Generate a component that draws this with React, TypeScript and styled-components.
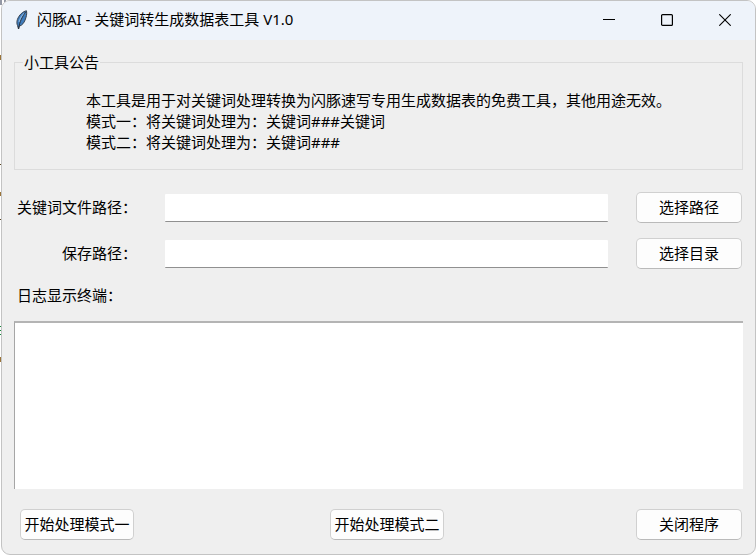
import React from "react";
import styled, { createGlobalStyle } from "styled-components";

const GlobalStyle = createGlobalStyle`
  *, *::before, *::after { box-sizing: border-box; }
  body {
    margin: 0;
    background: #fff;
    color: #000;
    font: 15px/21px "Noto Sans", "Noto Sans CJK SC", sans-serif;
  }
  button, input, textarea { font: inherit; color: inherit; }
`;

const Desktop = styled.div`
  position: relative;
  display: flex;
  min-height: 100vh;
  padding-left: 1px;
`;

const Backdrop = styled.svg`
  position: absolute;
  top: 0;
  left: 0;
`;

const Window = styled.main`
  position: relative;
  flex: 1;
  min-width: 0;
  display: flex;
  flex-direction: column;
  border: 1px solid #c3c3c3;
  border-radius: 9px;
  background: #efefef;
  overflow: hidden;
`;

const TitleBar = styled.header`
  display: flex;
  align-items: center;
  height: 39px;
  padding: 0 1px 2px 13px;
  background: #eef3fa;
`;

const Title = styled.h1`
  flex: 1;
  margin: 0 0 0 8px;
  font: inherit;
  white-space: nowrap;
`;

const WindowButton = styled.button`
  display: grid;
  place-items: center;
  width: 58px;
  height: 36px;
  padding: 0;
  border: 0;
  background: transparent;
`;

const Content = styled.div`
  flex: 1;
  display: flex;
  flex-direction: column;
  padding: 12px 12px 14px;
`;

const Notice = styled.fieldset`
  margin: 0;
  padding: 17px 8px 16px;
  border: 1px solid #dcdcdc;
`;

const NoticeTitle = styled.legend`
  padding: 0 1px;
`;

const NoticeText = styled.div`
  width: fit-content;
  margin: 0 auto;
`;

const NoticeLine = styled.p`
  margin: 0;
`;

const Form = styled.div`
  display: grid;
  grid-template-columns: 123px 1fr 106px;
  align-items: center;
  gap: 15px 28px;
  margin-top: 22px;
  padding-right: 1px;
`;

const Label = styled.label`
  text-align: right;
`;

const PathInput = styled.input`
  width: 100%;
  min-width: 0;
  height: 28px;
  padding: 0 4px;
  border: 0;
  border-bottom: 1px solid #909090;
  border-radius: 1px;
  background: #fff;
`;

const PushButton = styled.button<{ $wide?: boolean }>`
  width: ${(p) => (p.$wide ? 114 : 106)}px;
  height: 31px;
  padding: 0;
  border: 1px solid #d0d0d0;
  border-bottom-color: #bababa;
  border-radius: 5px;
  background: #fdfdfd;
  white-space: nowrap;
`;

const LogLabel = styled.label`
  margin: 16px 0 15px 3px;
`;

const Log = styled.textarea`
  flex: 1;
  width: 100%;
  min-height: 120px;
  padding: 4px;
  border: 0 solid #a6a6a6;
  border-width: 2px 0 0 1px;
  border-top-color: #b4b4b4;
  background: #fff;
  resize: none;
`;

const Actions = styled.footer`
  display: grid;
  grid-template-columns: 310fr 306fr auto;
  margin-top: 20px;
  padding: 0 1px 0 6px;
`;

const FeatherIcon = () => (
  <svg width="14" height="20" viewBox="0 0 14 20" aria-hidden="true">
    <path d="M11.500 .8C8 1.300 4 5 2.400 9.500c-.8 2.400-.6 4.200.1 6l1 3.500.8-2.800c3-1 4.800-3.500 5.800-6.200C11.300 7 12.100 4 11.500.8Z" fill="#3f7cbc" stroke="#39434f" strokeWidth="1" />
    <path d="M9.800 3C6.800 5.500 5 9 4.200 12" fill="none" stroke="#86b4e2" strokeWidth="1.500" />
    <path d="M10.500 2C7.500 7 4.500 11 3.600 19" fill="none" stroke="#20262e" strokeWidth=".9" />
  </svg>
);

const notice = [
  "本工具是用于对关键词处理转换为闪豚速写专用生成数据表的免费工具，其他用途无效。",
  "模式一：将关键词处理为：关键词###关键词",
  "模式二：将关键词处理为：关键词###",
];

const paths = [
  { id: "keyword-file", label: "关键词文件路径：", action: "选择路径" },
  { id: "save-dir", label: "保存路径：", action: "选择目录" },
];

export default function App() {
  return (
    <>
      <GlobalStyle />
      <Desktop>
        <Backdrop width="130" height="370" viewBox="0 0 130 370" aria-hidden="true">
          <path d="M1 0v5M4 1h2" stroke="#26304a" />
          <path d="M0 164.500h2M0 219.500h2" stroke="#5a4520" />
          <path d="M0 55h1v5H0zM0 192h1v4H0zM0 357h1v5H0z" fill="#9b7438" />
          <path d="M0 326.500h2M0 330.500h2M0 334.500h2" stroke="#16883a" />
        </Backdrop>
        <Window>
          <TitleBar>
            <FeatherIcon />
            <Title>闪豚AI - 关键词转生成数据表工具 V1.0</Title>
            <WindowButton aria-label="最小化">
              <svg width="12" height="12" viewBox="0 0 12 12" aria-hidden="true">
                <path d="M0 5.500h12" stroke="#000" />
              </svg>
            </WindowButton>
            <WindowButton aria-label="最大化">
              <svg width="12" height="12" viewBox="0 0 12 12" aria-hidden="true">
                <rect x=".6" y=".6" width="10.800" height="10.800" rx="1" fill="none" stroke="#000" strokeWidth="1.200" />
              </svg>
            </WindowButton>
            <WindowButton aria-label="关闭">
              <svg width="12" height="12" viewBox="0 0 12 12" aria-hidden="true">
                <path d="M.3.3l11.400 11.400M11.700.3L.3 11.700" stroke="#000" strokeWidth="1.100" />
              </svg>
            </WindowButton>
          </TitleBar>
          <Content>
            <Notice>
              <NoticeTitle>小工具公告</NoticeTitle>
              <NoticeText>
                {notice.map((line) => (
                  <NoticeLine key={line}>{line}</NoticeLine>
                ))}
              </NoticeText>
            </Notice>
            <Form>
              {paths.map((p) => (
                <React.Fragment key={p.id}>
                  <Label htmlFor={p.id}>{p.label}</Label>
                  <PathInput id={p.id} type="text" />
                  <PushButton type="button">{p.action}</PushButton>
                </React.Fragment>
              ))}
            </Form>
            <LogLabel htmlFor="log">日志显示终端：</LogLabel>
            <Log id="log" />
            <Actions>
              <PushButton type="button" $wide>开始处理模式一</PushButton>
              <PushButton type="button" $wide>开始处理模式二</PushButton>
              <PushButton type="button">关闭程序</PushButton>
            </Actions>
          </Content>
        </Window>
      </Desktop>
    </>
  );
}
